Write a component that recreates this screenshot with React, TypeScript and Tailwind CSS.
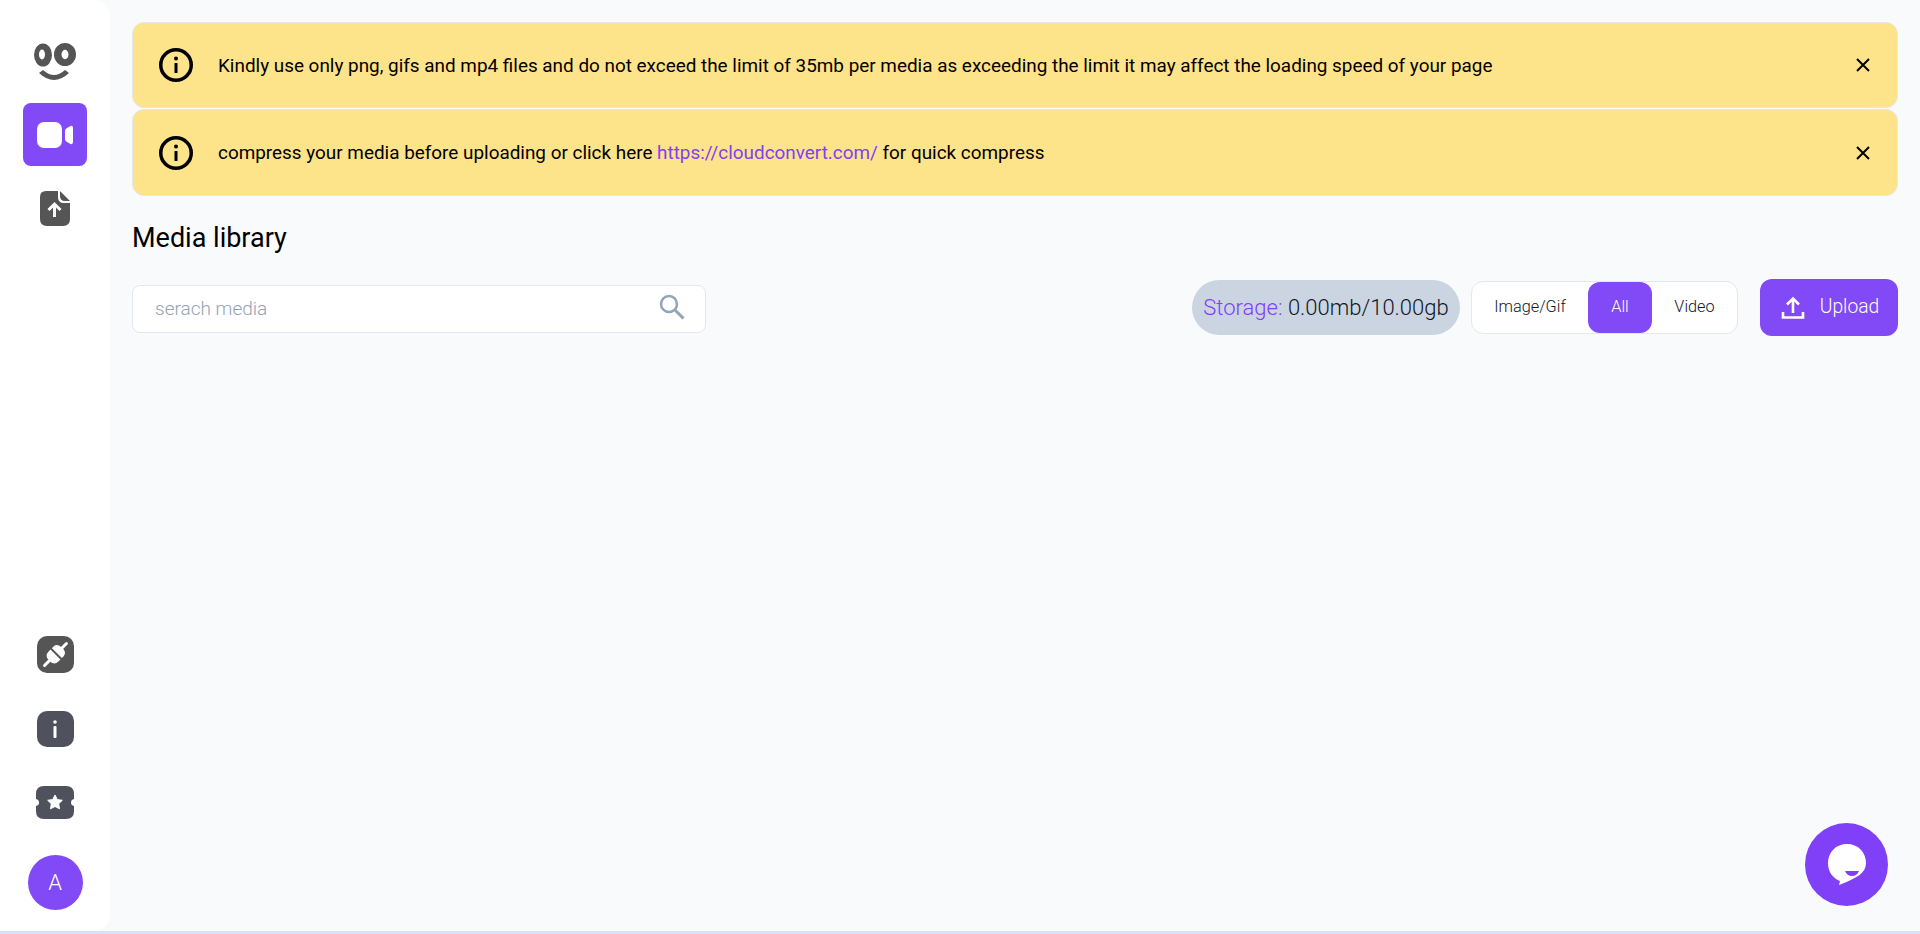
import React from "react";

const Info = () => (
  <svg width="36" height="36" viewBox="0 0 36 36" fill="none" className="shrink-0">
    <circle cx="18" cy="18" r="15.25" stroke="#000" strokeWidth="3.5" />
    <rect x="16.500" y="16" width="3" height="10" fill="#000" />
    <circle cx="18" cy="11.500" r="2" fill="#000" />
  </svg>
);

const Close = () => (
  <svg width="16" height="16" viewBox="0 0 16 16" fill="none" className="shrink-0">
    <path d="M2 2 L14 14 M14 2 L2 14" stroke="#000" strokeWidth="2" />
  </svg>
);

function Alert({ children, h, pad }: { children: React.ReactNode; h: string; pad: string }) {
  return (
    <div className={`flex items-center ${h} rounded-xl border border-[#e5e7eb] bg-[#fde38a] pl-[25px] pr-[26px]`}>
      <Info />
      <div className={`ml-[24px] flex-1 text-[18.9px] leading-7 text-black ${pad}`}>{children}</div>
      <Close />
    </div>
  );
}

export default function App() {
  return (
    <div className="relative h-[934px] w-full overflow-hidden bg-[#f9fafc] font-['Roboto',sans-serif]">
      <div className="flex h-[931px]">
        <aside className="flex w-[110px] shrink-0 flex-col items-center rounded-r-2xl bg-white">
          <svg width="44" height="38" viewBox="0 0 44 38" className="mt-[43px] ml-[-1px]" fillRule="evenodd">
            <path d="M1 12 a9 11.500 0 1 0 18 0 a9 11.500 0 1 0 -18 0 Z M6 11.500 a3 5 0 1 0 6 0 a3 5 0 1 0 -6 0 Z" fill="#555" />
            <path d="M21 11.500 a11 11.500 0 1 0 22 0 a11 11.500 0 1 0 -22 0 Z M28.500 11.500 a3.500 4.700 0 1 0 7 0 a3.500 4.700 0 1 0 -7 0 Z" fill="#555" />
            <path d="M6 30 L10 27 Q21 37 32 27 L36 30 Q21 44 6 30 Z" fill="#555" />
          </svg>
          <div className="mt-[22px] flex h-[63px] w-[64px] items-center justify-center rounded-lg bg-[#8249f6]">
            <svg width="36" height="26" viewBox="0 0 36 26">
              <rect x="0" y="0" width="25" height="26" rx="7" fill="#fff" />
              <path d="M30 6 L33 4.200 Q36 3 36 6 V20 Q36 23 33 21.800 L30 20 Q28 19 28 17 V9 Q28 7 30 6 Z" fill="#fff" />
            </svg>
          </div>
          <svg width="30" height="35" viewBox="0 0 30 35" className="mt-[25px]">
            <path d="M6 0 H18 V6 Q18 12 24 12 H30 V28 Q30 35 23 35 H7 Q0 35 0 28 V6 Q0 0 6 0 Z" fill="#555" />
            <path d="M20 0 L30 10 H25 Q20 10 20 5 Z" fill="#555" />
            <path d="M14.500 26 V13 M8.500 19 L14.500 13 L20.500 19" stroke="#fff" strokeWidth="3" fill="none" />
          </svg>
          <div className="flex-1" />
          <div className="mb-[38px] flex h-[37px] w-[37px] items-center justify-center rounded-[10px] bg-[#555]">
            <svg width="37" height="37" viewBox="0 0 37 37">
              <g transform="rotate(45 18.500 18.500)" fill="#fff">
                <rect x="17" y="1.500" width="3" height="9" rx="1.500" />
                <rect x="17" y="26" width="3" height="9.500" rx="1.500" />
                <path d="M11.500 16.500 H25.500 V14 Q25.500 9 18.500 9 Q11.500 9 11.500 14 Z" />
                <path d="M11.500 18.500 H25.500 V21 Q25.500 27.500 18.500 27.500 Q11.500 27.500 11.500 21 Z" />
              </g>
            </svg>
          </div>
          <div className="mb-[39px] flex h-[36px] w-[37px] items-center justify-center rounded-[10px] bg-[#4f525c]">
            <svg width="6" height="20" viewBox="0 0 6 20">
              <circle cx="3" cy="3" r="1.800" fill="#fff" />
              <rect x="1.500" y="7" width="3" height="12" rx="1" fill="#fff" />
            </svg>
          </div>
          <div className="mb-[36px] flex">
            <svg width="38" height="33" viewBox="0 0 38 33">
              <path d="M8 0 H30 Q38 0 38 8 V13 Q35 13.500 35 16.500 Q35 19.500 38 20 V25 Q38 33 30 33 H8 Q0 33 0 25 V20 Q3 19.500 3 16.500 Q3 13.500 0 13 V8 Q0 0 8 0 Z" fill="#4f525c" />
              <path d="M19 9 L21.300 13.600 L26.300 14.300 L22.700 17.800 L23.500 22.800 L19 20.500 L14.500 22.800 L15.300 17.800 L11.700 14.300 L16.700 13.600 Z" fill="#fff" strokeLinejoin="round" stroke="#fff" />
            </svg>
          </div>
          <div className="mb-[21px] flex h-[55px] w-[55px] items-center justify-center rounded-full bg-[#8249f6] text-[22px] font-light text-white">
            A
          </div>
        </aside>
        <main className="flex-1 pl-[22px] pr-[22px] pt-[22px]">
          <div className="flex flex-col gap-[1px]">
            <Alert h="h-[86px]" pad="pt-[2px]">
              Kindly use only png, gifs and mp4 files and do not exceed the limit of 35mb per media as exceeding the limit it may affect the loading speed of your page
            </Alert>
            <Alert h="h-[87px]" pad="">
              compress your media before uploading or click here <span className="text-[#8040f8]">https://cloudconvert.com/</span> for quick compress
            </Alert>
          </div>
          <h1 className="mt-[24px] text-[27px] leading-9 font-normal text-black">Media library</h1>
          <div className="mt-[23px] flex items-center">
            <div className="mt-[3px] flex h-[48px] w-[574px] items-center rounded-lg border border-[#e2e8f0] bg-white pl-[22px] pr-[20px]">
              <span className="flex-1 text-[19px] font-light text-[#94a3b8]">serach media</span>
              <svg width="26" height="26" viewBox="0 0 26 26" fill="none" className="mb-[5px]">
                <circle cx="10" cy="10" r="8" stroke="#94a3b8" strokeWidth="2.500" />
                <path d="M16 16 L24.500 24.500" stroke="#94a3b8" strokeWidth="3" />
              </svg>
            </div>
            <div className="flex-1" />
            <div className="flex h-[55px] w-[268px] items-center justify-center rounded-full bg-[#cbd5e1] text-[22px] font-light text-[#0f172a]">
              <span className="text-[#8040f8]">Storage:</span>&nbsp;0.00mb/10.00gb
            </div>
            <div className="ml-[11px] flex h-[53px] w-[267px] items-center rounded-xl border border-[#e2e8f0] bg-white text-[16.3px] font-light text-[#0f172a]">
              <div className="w-[116px] text-center">Image/Gif</div>
              <div className="flex h-[51px] w-[64px] items-center justify-center rounded-xl bg-[#8249f6] text-white">All</div>
              <div className="flex-1 text-center">Video</div>
            </div>
            <div className="ml-[22px] flex h-[57px] w-[138px] items-center justify-center rounded-xl bg-[#8249f6] pl-[2px] text-[19.3px] font-light text-white">
              <svg width="24" height="24" viewBox="0 0 24 24" fill="none" stroke="#fff" strokeWidth="2.600" className="mr-[15px]">
                <path d="M2 16 V21.500 H22 V16 M12 17 V3 M6 8.500 L12 2.500 L18 8.500" />
              </svg>
              Upload
            </div>
          </div>
        </main>
      </div>
      <div className="h-[3px] bg-[#d6e2f7]" />
      <div className="absolute left-[1805px] top-[823px] flex h-[83px] w-[83px] items-center justify-center rounded-full bg-[#8040f8]">
        <svg width="40" height="44" viewBox="0 0 40 44">
          <path d="M20 1 C31 1 39 9 39 20 C39 30 30 35 12 42 L13 38 C5 35 1 28 1 20 C1 9 9 1 20 1 Z" fill="#fff" />
          <path d="M18 28 Q25 28 32 28 Q30 33 25 33 Q20 33 18 28 Z" fill="#8040f8" />
        </svg>
      </div>
    </div>
  );
}
